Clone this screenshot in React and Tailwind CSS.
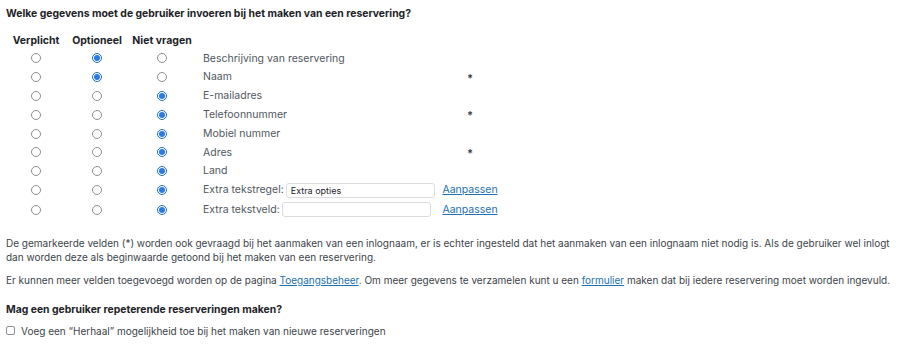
import React from "react";

function Radio({ checked }) {
  return checked ? (
    <span className="inline-flex w-[10px] h-[10px] rounded-full border border-[#2271b1] bg-white items-center justify-center">
      <span className="w-[6px] h-[6px] rounded-full bg-[#2c7be5]" />
    </span>
  ) : (
    <span className="inline-block w-[10px] h-[10px] rounded-full border border-[#8c8f94] bg-white" />
  );
}

const rows = [
  { label: "Beschrijving van reservering", sel: 1 },
  { label: "Naam", sel: 1, star: true },
  { label: "E-mailadres", sel: 2 },
  { label: "Telefoonnummer", sel: 2, star: true },
  { label: "Mobiel nummer", sel: 2 },
  { label: "Adres", sel: 2, star: true },
  { label: "Land", sel: 2 },
];

export default function App() {
  return (
    <div className="bg-white w-[900px] h-[346px] overflow-hidden text-[#3c434a] font-['Inter',sans-serif] px-[6px] pt-[7px]">
      <h2 className="text-[10.4px] font-bold text-[#1d2327] leading-[14px]">
        Welke gegevens moet de gebruiker invoeren bij het maken van een reservering?
      </h2>
      <div className="mt-[12px] text-[10.5px]">
        <div className="grid grid-cols-[60px_62px_68px_244px_60px] h-[16px] items-center font-bold text-[#1d2327]">
          <div className="text-center">Verplicht</div>
          <div className="text-center">Optioneel</div>
          <div className="text-center">Niet vragen</div>
          <div />
          <div />
        </div>
        {rows.map((r) => (
          <div key={r.label} className="grid grid-cols-[60px_62px_68px_244px_60px] h-[18.8px] items-center">
            <div className="flex justify-center"><Radio checked={r.sel === 0} /></div>
            <div className="flex justify-center"><Radio checked={r.sel === 1} /></div>
            <div className="flex justify-center"><Radio checked={r.sel === 2} /></div>
            <div className="pl-[7px] text-[#50575e]">{r.label}</div>
            <div className="text-center text-[#3c434a] text-[11px] font-bold leading-none pt-[2px]">{r.star ? "*" : ""}</div>
          </div>
        ))}
        <div className="grid grid-cols-[60px_62px_68px_244px_60px] h-[19.4px] items-center">
          <div className="flex justify-center"><Radio /></div>
          <div className="flex justify-center"><Radio /></div>
          <div className="flex justify-center"><Radio checked /></div>
          <div className="pl-[7px] text-[#50575e] flex items-center gap-[2px]">
            <span>Extra tekstregel:</span>
            <span className="w-[149px] h-[15px] border border-[#dcdcde] rounded-[3px] bg-white text-[9px] text-[#1d2327] px-[4px] flex items-center">Extra opties</span>
          </div>
          <div className="text-center"><a className="text-[#2271b1] underline">Aanpassen</a></div>
        </div>
        <div className="grid grid-cols-[60px_62px_68px_244px_60px] h-[19.6px] items-center">
          <div className="flex justify-center"><Radio /></div>
          <div className="flex justify-center"><Radio /></div>
          <div className="flex justify-center"><Radio checked /></div>
          <div className="pl-[7px] text-[#50575e] flex items-center gap-[2px]">
            <span>Extra tekstveld:</span>
            <span className="w-[149px] h-[15px] border border-[#dcdcde] rounded-[3px] bg-white" />
          </div>
          <div className="text-center"><a className="text-[#2271b1] underline">Aanpassen</a></div>
        </div>
      </div>
      <p className="mt-[16px] text-[10px] leading-[14px]">
        De gemarkeerde velden (*) worden ook gevraagd bij het aanmaken van een inlognaam, er is echter ingesteld dat het aanmaken van een inlognaam niet nodig is. Als de gebruiker wel inlogt dan worden deze als beginwaarde getoond bij het maken van een reservering.
      </p>
      <p className="mt-[9px] text-[10px] leading-[14px]">
        Er kunnen meer velden toegevoegd worden op de pagina <a className="text-[#2271b1] underline">Toegangsbeheer</a>. Om meer gegevens te verzamelen kunt u een <a className="text-[#2271b1] underline">formulier</a> maken dat bij iedere reservering moet worden ingevuld.
      </p>
      <h2 className="mt-[16px] text-[10.4px] font-bold text-[#1d2327] leading-[14px]">
        Mag een gebruiker repeterende reserveringen maken?
      </h2>
      <div className="mt-[7px] flex items-center gap-[6px] text-[10px] leading-[14px]">
        <span className="inline-block w-[9px] h-[9px] border border-[#8c8f94] rounded-[2px] bg-white" />
        <span>Voeg een “Herhaal” mogelijkheid toe bij het maken van nieuwe reserveringen</span>
      </div>
    </div>
  );
}
